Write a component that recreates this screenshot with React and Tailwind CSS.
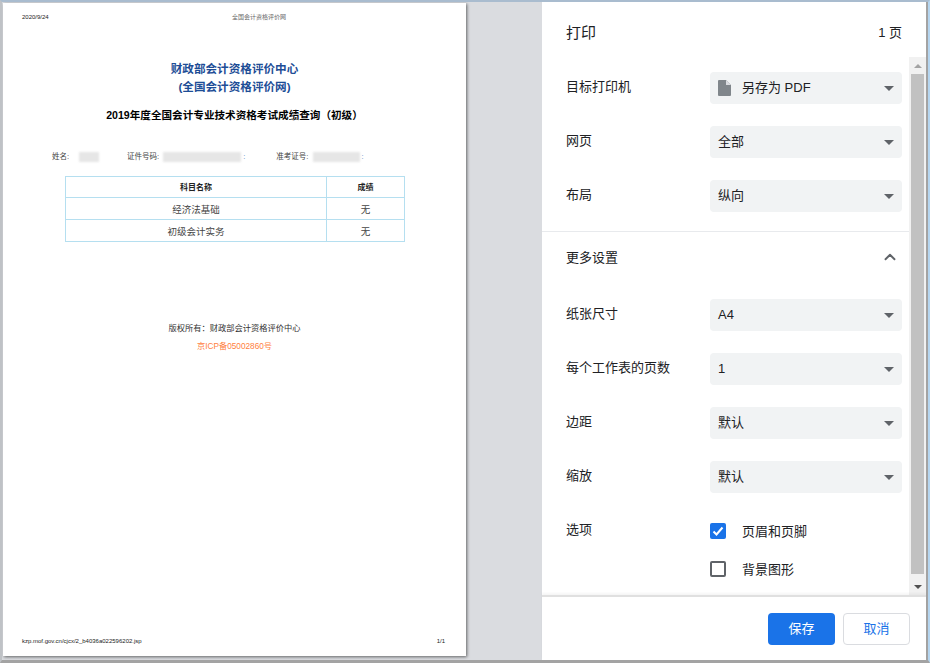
import React from 'react';
import { ChevronUp } from 'lucide-react';

const cjk = '[font-family:"Liberation_Sans","Noto_Sans_CJK_SC",sans-serif]';

const Caret = () => (
  <span className="w-0 h-0 border-l-[5px] border-r-[5px] border-t-[5px] border-l-transparent border-r-transparent border-t-[#5f6368]" />
);

const Select = ({ value, icon }) => (
  <div className="w-[192px] h-8 rounded bg-[#f1f3f4] flex items-center justify-between pl-2 pr-[8px] text-[13px] text-[#202124]">
    <div className="flex items-center">
      {icon && (
        <svg width="16" height="18" viewBox="0 0 16 18" className="mr-[9px] -ml-[1px]">
          <path d="M2 1h7l5 5v10a1 1 0 0 1-1 1H2a1 1 0 0 1-1-1V2a1 1 0 0 1 1-1z" fill="#80868b" />
          <path d="M9 1l5 5H9z" fill="#dadce0" />
        </svg>
      )}
      <span>{value}</span>
    </div>
    <Caret />
  </div>
);

const Row = ({ label, value, icon }) => (
  <div className="flex items-center h-8">
    <div className="w-[144px] text-[13px] text-[#202124] -mt-[2px]">{label}</div>
    <Select value={value} icon={icon} />
  </div>
);

const Blur = ({ className }) => <span className={`inline-block h-[10px] bg-[#e6e6e6] blur-[1px] ${className}`} />;

const Page = () => (
  <div className="w-[463px] h-[653px] mt-[1px] ml-[1px] bg-white shadow-[1px_1px_3px_rgba(0,0,0,0.55)] flex flex-col text-[#222] shrink-0">
    <div className="flex justify-between pl-[19px] pr-[19px] pt-[11px] h-[14px] text-[6px] leading-[6px]">
      <span>2020/9/24</span>
      <span className="text-[#666] mr-[161px] font-['Liberation_Serif','Noto_Sans_CJK_SC',serif]">全国会计资格评价网</span>
    </div>
    <div className="mt-[43px] text-center text-[11.6px] leading-[18px] font-bold text-[#1d4d96]">
      <div>财政部会计资格评价中心</div>
      <div>(全国会计资格评价网)</div>
    </div>
    <div className="mt-[11px] text-center text-[10.6px] leading-[16px] font-bold text-black">2019年度全国会计专业技术资格考试成绩查询（初级）</div>
    <div className="mt-[28px] ml-[49px] h-[12px] flex items-center text-[7.5px] text-[#444]">
      <span>姓名:</span>
      <Blur className="ml-[10px] w-[20px]" />
      <span className="ml-[28px]">证件号码:</span>
      <Blur className="ml-[4px] w-[78px]" />
      <span className="ml-[2px] text-[#4a7fc0]">:</span>
      <span className="ml-[31px]">准考证号:</span>
      <Blur className="ml-[5px] w-[47px]" />
      <span className="ml-[1px] text-[#4a7fc0]">:</span>
    </div>
    <table className="mt-[13px] ml-[62px] w-[339px] border-collapse text-[9.5px] text-center table-fixed">
      <colgroup>
        <col className="w-[261px]" />
        <col className="w-[78px]" />
      </colgroup>
      <tbody>
        <tr className="h-[21px] font-bold text-[8px] text-[#222]">
          <td className="border border-[#b5dff0] pt-[1px]">科目名称</td>
          <td className="border border-[#b5dff0] pt-[1px]">成绩</td>
        </tr>
        <tr className="h-[22px] text-[#444]">
          <td className="border border-[#b5dff0] pt-[3px]">经济法基础</td>
          <td className="border border-[#b5dff0] pt-[3px]">无</td>
        </tr>
        <tr className="h-[22px] text-[#444]">
          <td className="border border-[#b5dff0] pt-[3px]">初级会计实务</td>
          <td className="border border-[#b5dff0] pt-[3px]">无</td>
        </tr>
      </tbody>
    </table>
    <div className="mt-[81px] text-center text-[8.25px] leading-[12px] text-[#333]">版权所有：财政部会计资格评价中心</div>
    <div className="mt-[6px] text-center text-[8.25px] leading-[12px] text-[#ff8040]">京ICP备05002860号</div>
    <div className="mt-auto mb-[12px] flex justify-between pl-[19px] pr-[21px] text-[6px] leading-[6px]">
      <span>kzp.mof.gov.cn/cjcx/2_b4036a022596202.jsp</span>
      <span>1/1</span>
    </div>
  </div>
);

const Scrollbar = () => (
  <div className="w-[17px] shrink-0 bg-[#f1f1f1] flex flex-col items-center">
    <div className="h-[17px] flex items-center justify-center shrink-0">
      <span className="w-0 h-0 border-l-[4px] border-r-[4px] border-b-[4px] border-l-transparent border-r-transparent border-b-[#a3a3a3]" />
    </div>
    <div className="w-[13px] flex-1 bg-[#c1c1c1] mb-[4px]" />
    <div className="h-[17px] flex items-center justify-center shrink-0">
      <span className="w-0 h-0 border-l-[4px] border-r-[4px] border-t-[4px] border-l-transparent border-r-transparent border-t-[#505050]" />
    </div>
  </div>
);

const Sidebar = () => (
  <div className="w-[386px] ml-[76px] h-full bg-white border-r-2 border-[#a3a3a3] flex flex-col shrink-0">
    <div className="h-[55px] shrink-0 flex justify-between pl-6 pr-6 pt-[21px]">
      <span className="text-[15px] leading-[20px] text-[#202124]">打印</span>
      <span className="text-[13px] leading-[20px] text-[#202124]">1 页</span>
    </div>
    <div className="flex-1 flex min-h-0">
      <div className="flex-1 min-w-0">
        <div className="pl-6 pt-[15px] flex flex-col gap-[22px]">
          <Row label="目标打印机" value="另存为 PDF" icon />
          <Row label="网页" value="全部" />
          <Row label="布局" value="纵向" />
        </div>
        <div className="mt-[19px] border-t border-[#e8eaed] h-[52px] pl-6 pr-[10px] flex items-center justify-between text-[13px] text-[#202124]">
          <span>更多设置</span>
          <ChevronUp size={18} strokeWidth={2.5} className="text-[#5f6368] -mt-[2px]" />
        </div>
        <div className="pl-6 pt-[16px] flex flex-col gap-[22px]">
          <Row label="纸张尺寸" value="A4" />
          <Row label="每个工作表的页数" value="1" />
          <Row label="边距" value="默认" />
          <Row label="缩放" value="默认" />
        </div>
        <div className="pl-6 pt-[30px] flex text-[13px] text-[#202124]">
          <div className="w-[144px] leading-[20px] -mt-[3px]">选项</div>
          <div className="flex flex-col gap-[22px]">
            <div className="flex items-center h-4">
              <span className="w-4 h-4 rounded-[2px] bg-[#1a73e8] flex items-center justify-center mr-4">
                <svg width="12" height="12" viewBox="0 0 12 12" fill="none" stroke="white" strokeWidth="2">
                  <path d="M1.5 6.5l3 3 6-7" />
                </svg>
              </span>
              <span className="mt-[1px]">页眉和页脚</span>
            </div>
            <div className="flex items-center h-4">
              <span className="w-4 h-4 rounded-[2px] border-2 border-[#5f6368] mr-4" />
              <span className="mt-[1px]">背景图形</span>
            </div>
          </div>
        </div>
      </div>
      <Scrollbar />
    </div>
    <div className="h-[65px] shrink-0 relative border-t-2 border-[#e0e0e0] shadow-[0_-2px_2px_rgba(0,0,0,0.04)] flex items-start justify-end gap-2 pt-4 pr-[16px]">
      <button className="w-[67px] h-8 rounded bg-[#1a73e8] text-white text-[13px]">保存</button>
      <button className="w-[67px] h-8 rounded border border-[#dadce0] bg-white text-[#1a73e8] text-[13px]">取消</button>
    </div>
  </div>
);

export default function App() {
  return (
    <div className={`w-[930px] h-[663px] overflow-hidden bg-[#dadce0] border-t-[2px] border-l-2 border-r-2 border-b-[3px] border-t-[#a9bccf] border-l-[#bfc2c6] border-r-[#b5d5ef] border-b-[#a3a3a3] flex ${cjk}`}>
      <Page />
      <Sidebar />
    </div>
  );
}
